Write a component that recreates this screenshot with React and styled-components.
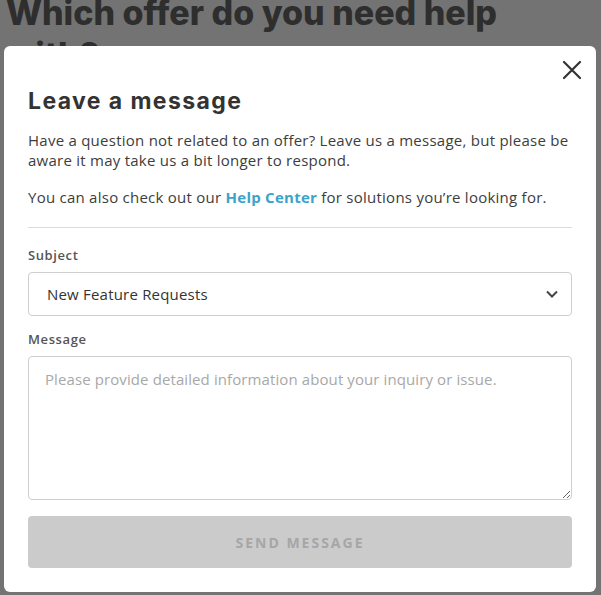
import React from 'react';
import styled, { createGlobalStyle } from 'styled-components';

const GlobalStyle = createGlobalStyle`
  html, body {
    margin: 0;
    padding: 0;
    background: #fff;
  }
  body {
    font-family: "Open Sans", "Liberation Sans", sans-serif;
  }
`

const Page = styled.div`
  width: 601px;
  height: 595px;
  overflow: hidden;
  padding: 0 6px;
  box-sizing: border-box;
`

const PageTitle = styled.h1`
  margin: -8px 0 0;
  font-family: Inter, "Liberation Sans", sans-serif;
  font-weight: 800;
  font-size: 34px;
  line-height: 42px;
  color: #676767;
`

const Overlay = styled.div`
  position: fixed;
  inset: 0;
  background: rgba(0, 0, 0, 0.55);
  padding: 46px 5px 0 4px;
  box-sizing: border-box;
`

const Modal = styled.div`
  position: relative;
  background: #fff;
  border-radius: 6px;
  height: 546px;
  padding: 40px 24px 0 24px;
  box-sizing: border-box;
  color: #333;
`

const CloseButton = styled.button`
  position: absolute;
  top: 14px;
  right: 14px;
  width: 20px;
  height: 20px;
  padding: 0;
  border: none;
  background: none;
  display: flex;
  align-items: center;
  justify-content: center;
`

const Title = styled.h2`
  margin: 0 0 14px;
  font-family: Inter, "Liberation Sans", sans-serif;
  font-weight: 700;
  font-size: 23px;
  line-height: 30px;
  letter-spacing: 1.4px;
  color: #333;
`

const Text = styled.p`
  margin: 0 0 17px;
  font-size: 15px;
  line-height: 20px;
  letter-spacing: 0.25px;
  color: #3d3d3d;
`

const Link = styled.a`
  color: #3ba3c9;
  font-weight: 700;
  text-decoration: none;
`

const Divider = styled.hr`
  border: none;
  border-top: 1px solid #dcdcdc;
  margin: 20px 0 18px;
`

const Field = styled.div`
  display: flex;
  flex-direction: column;
  margin-bottom: 14px;
`

const Label = styled.label`
  font-size: 13px;
  font-weight: 600;
  color: #555;
  letter-spacing: 0.6px;
  line-height: 18px;
  margin-bottom: 8px;
`

const SelectBox = styled.div`
  height: 44px;
  border: 1px solid #cfcfcf;
  border-radius: 4px;
  box-sizing: border-box;
  display: flex;
  align-items: center;
  justify-content: space-between;
  padding: 0 12px 0 18px;
  font-size: 15px;
  letter-spacing: 0.2px;
  color: #333;
`

const TextArea = styled.textarea`
  height: 144px;
  border: 1px solid #cfcfcf;
  border-radius: 4px;
  box-sizing: border-box;
  padding: 12px 16px;
  font-family: "Open Sans", "Liberation Sans", sans-serif;
  font-size: 15px;
  line-height: 20px;
  letter-spacing: 0.1px;
  color: #333;
  resize: vertical;

  &::placeholder {
    color: #a8a8a8;
  }
`

const SendButton = styled.button`
  width: 100%;
  height: 52px;
  margin-top: 2px;
  border: none;
  border-radius: 4px;
  background: #cbcbcb;
  color: #a6a6a6;
  font-family: "Open Sans", "Liberation Sans", sans-serif;
  font-size: 14px;
  font-weight: 700;
  letter-spacing: 2px;
`

export default function App() {
  return (
    <>
      <GlobalStyle />
      <Page>
        <PageTitle>Which offer do you need help with?</PageTitle>
      </Page>
      <Overlay>
        <Modal>
          <CloseButton aria-label="Close">
            <svg width="20" height="20" viewBox="0 0 20 20">
              <path d="M2 2 L18 18 M18 2 L2 18" stroke="#333" strokeWidth="2.2" strokeLinecap="round" />
            </svg>
          </CloseButton>
          <Title>Leave a message</Title>
          <Text>
            Have a question not related to an offer? Leave us a message, but please be aware it may take us a bit longer to respond.
          </Text>
          <Text>
            You can also check out our <Link href="#">Help Center</Link> for solutions you’re looking for.
          </Text>
          <Divider />
          <Field>
            <Label>Subject</Label>
            <SelectBox>
              <span>New Feature Requests</span>
              <svg width="14" height="14" viewBox="0 0 14 14">
                <path d="M2 4.5 L7 9.5 L12 4.5" fill="none" stroke="#444" strokeWidth="2" />
              </svg>
            </SelectBox>
          </Field>
          <Field>
            <Label>Message</Label>
            <TextArea placeholder="Please provide detailed information about your inquiry or issue." />
          </Field>
          <SendButton disabled>SEND MESSAGE</SendButton>
        </Modal>
      </Overlay>
    </>
  )
}
